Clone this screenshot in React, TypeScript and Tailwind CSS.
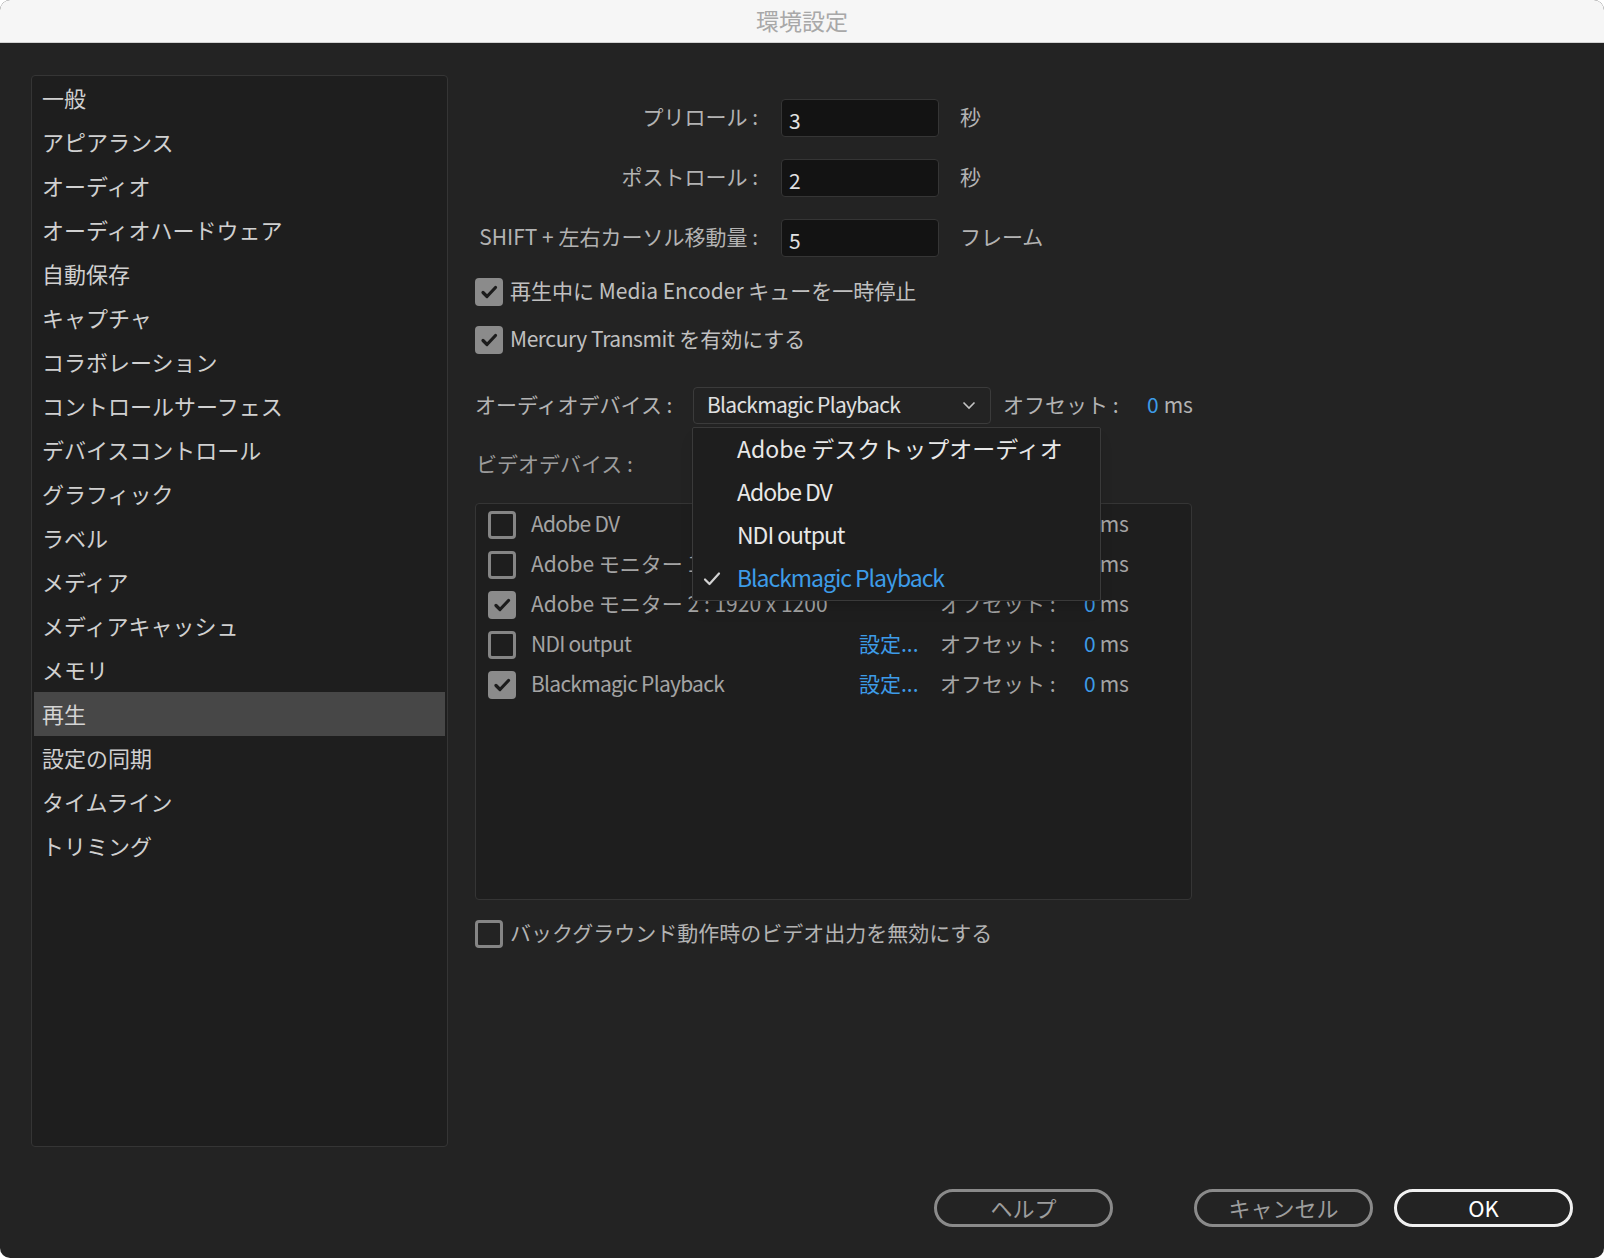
import React from 'react';

const SIDEBAR = [
  '一般',
  'アピアランス',
  'オーディオ',
  'オーディオハードウェア',
  '自動保存',
  'キャプチャ',
  'コラボレーション',
  'コントロールサーフェス',
  'デバイスコントロール',
  'グラフィック',
  'ラベル',
  'メディア',
  'メディアキャッシュ',
  'メモリ',
  '再生',
  '設定の同期',
  'タイムライン',
  'トリミング',
];

const DEVICES = [
  { name: 'Adobe DV', checked: false, settings: false, latin: true },
  { name: 'Adobe モニター 1 : 1920 x 1080', checked: false, settings: false, latin: false },
  { name: 'Adobe モニター 2 : 1920 x 1200', checked: true, settings: false, latin: false },
  { name: 'NDI output', checked: false, settings: true, latin: true },
  { name: 'Blackmagic Playback', checked: true, settings: true, latin: true },
];

const MENU = [
  { label: 'Adobe デスクトップオーディオ', latin: false },
  { label: 'Adobe DV', latin: true },
  { label: 'NDI output', latin: true },
  { label: 'Blackmagic Playback', latin: true },
];

const CheckBox = ({ checked }: { checked: boolean }) =>
  checked ? (
    <span className="w-[28px] h-[28px] shrink-0 rounded-[4px] bg-[#8b8b8b] flex items-center justify-center">
      <svg width="20" height="20" viewBox="0 0 20 20">
        <path d="M4 10.5l4 4L16.5 5.5" stroke="#1c1c1c" strokeWidth="3.2" fill="none" strokeLinecap="round" strokeLinejoin="round" />
      </svg>
    </span>
  ) : (
    <span className="w-[28px] h-[28px] shrink-0 rounded-[4px] border-[3px] border-[#858585]" />
  );

const NumRow = ({ label, value, unit }: { label: string; value: string; unit: string }) => (
  <div className="flex items-center h-[38px]">
    <span className="w-[283px] pb-[3px] text-right text-[21px] text-[#b3b3b3] whitespace-nowrap">{label}</span>
    <div className="ml-[23px] w-[158px] h-[38px] rounded-[4px] bg-[#131313] border border-[#353535] flex items-center pl-[7px] pt-[4px] text-[21px] text-[#e2e2e2]">
      {value}
    </div>
    <span className="ml-[21px] pb-[3px] text-[21px] text-[#b3b3b3]">{unit}</span>
  </div>
);

export default function App() {
  return (
    <div className="w-[1604px] h-[1258px] bg-white font-['Noto_Sans_CJK_JP',sans-serif] leading-none">
      <div className="w-full h-full rounded-[10px] overflow-hidden bg-[#232323] flex flex-col">
        {/* title bar */}
        <div className="h-[43px] shrink-0 bg-[#f6f6f6] border-b border-[#d2d2d2] flex items-center justify-center pb-[2px] text-[23px] text-[#a8a8a8]">
          環境設定
        </div>

        <div className="flex-1 flex flex-col px-[31px] pt-[32px] pb-[31px]">
          <div className="flex h-[1072px]">
            {/* sidebar */}
            <div className="w-[417px] h-full rounded-[4px] border border-[#353535] bg-[#1e1e1e] px-[2px]">
              {SIDEBAR.map((item) => (
                <div
                  key={item}
                  className={
                    item === '再生'
                      ? 'h-[44px] flex items-center pl-[8px] pb-[3px] text-[22px] text-[#d4d4d4] bg-[#474747]'
                      : 'h-[44px] flex items-center pl-[8px] pb-[3px] text-[22px] text-[#d0d0d0]'
                  }
                >
                  {item}
                </div>
              ))}
            </div>

            {/* main panel */}
            <div className="ml-[27px] flex flex-col pt-[24px]">
              <div className="flex flex-col gap-[22px]">
                <NumRow label="プリロール :" value="3" unit="秒" />
                <NumRow label="ポストロール :" value="2" unit="秒" />
                <NumRow label="SHIFT + 左右カーソル移動量 :" value="5" unit="フレーム" />
              </div>

              <div className="mt-[21px] flex flex-col gap-[20px]">
                <label className="flex items-center gap-[7px] text-[21px] text-[#c0c0c0]">
                  <CheckBox checked />
                  <span className="pb-[3px]">再生中に Media Encoder キューを一時停止</span>
                </label>
                <label className="flex items-center gap-[7px] text-[21px] text-[#c0c0c0]">
                  <CheckBox checked />
                  <span className="pb-[3px]">
                    <span className="tracking-[-0.02em]">Mercury Transmit</span> を有効にする
                  </span>
                </label>
              </div>

              {/* audio device */}
              <div className="mt-[33px] flex items-center h-[37px]">
                <span className="w-[218px] pb-[3px] text-[21px] text-[#b3b3b3]">オーディオデバイス :</span>
                <div className="relative">
                  <div className="w-[298px] h-[37px] rounded-[4px] border border-[#3b3b3b] bg-[#232323] flex items-center justify-between pl-[13px] pr-[14px] text-[21px] text-[#e0e0e0]">
                    <span className="pb-[2px] tracking-[-0.035em]">Blackmagic Playback</span>
                    <svg width="14" height="9" viewBox="0 0 14 9">
                      <path d="M1.5 1.5l5.5 5.5 5.5-5.5" stroke="#c4c4c4" strokeWidth="1.6" fill="none" />
                    </svg>
                  </div>
                  {/* open popup menu */}
                  <div className="absolute left-[-1px] top-[40px] z-10 w-[409px] rounded-[2px] border border-[#3a3a3a] bg-[#1e1e1e] shadow-lg">
                    {MENU.map((m) => (
                      <div key={m.label} className="relative h-[43px] flex items-center pl-[44px] pb-[3px]">
                        {m.label === 'Blackmagic Playback' && (
                          <svg className="absolute left-[10px] top-[14px]" width="18" height="16" viewBox="0 0 18 16">
                            <path d="M2 8.5l4.5 4.5L16 2.5" stroke="#d2d2d2" strokeWidth="2.2" fill="none" strokeLinecap="round" strokeLinejoin="round" />
                          </svg>
                        )}
                        <span
                          className={
                            (m.label === 'Blackmagic Playback' ? 'text-[23px] text-[#3d9ce8]' : 'text-[23px] text-[#e8e8e8]') +
                            (m.latin ? ' tracking-[-0.045em]' : '')
                          }
                        >
                          {m.label}
                        </span>
                      </div>
                    ))}
                  </div>
                </div>
                <span className="ml-[12px] w-[144px] pb-[3px] text-[21px] text-[#b3b3b3]">オフセット :</span>
                <span className="pb-[3px] text-[21px] text-[#3d9ce8]">0</span>
                <span className="ml-[5px] pb-[3px] text-[21px] text-[#b3b3b3]">ms</span>
              </div>

              {/* video devices */}
              <div className="mt-[26px] h-[30px] flex items-center pl-[1px] pb-[3px] text-[21px] text-[#9c9c9c]">ビデオデバイス :</div>

              <div className="mt-[23px] w-[717px] h-[397px] rounded-[4px] border border-[#353535] bg-[#1e1e1e] pt-[1px]">
                {DEVICES.map((d) => (
                  <div key={d.name} className="h-[40px] flex items-center pl-[12px] text-[21px] text-[#a4a4a4]">
                    <CheckBox checked={d.checked} />
                    <span className={'ml-[15px] w-[328px] pb-[3px] whitespace-nowrap' + (d.latin ? ' tracking-[-0.035em]' : '')}>
                      {d.name}
                    </span>
                    <span className="w-[81px] pb-[3px] text-[#3d9ce8]">{d.settings ? '設定...' : ''}</span>
                    <span className="w-[144px] pb-[3px]">オフセット :</span>
                    <span className="pb-[3px] text-[#3d9ce8]">0</span>
                    <span className="ml-[4px] pb-[3px]">ms</span>
                  </div>
                ))}
              </div>

              <label className="mt-[20px] flex items-center gap-[7px] text-[21px] text-[#b3b3b3]">
                <CheckBox checked={false} />
                <span className="pb-[3px]">バックグラウンド動作時のビデオ出力を無効にする</span>
              </label>
            </div>
          </div>

          {/* buttons */}
          <div className="mt-[42px] flex justify-end items-center">
            <button className="w-[179px] h-[38px] rounded-full border-[3px] border-[#8a8a8a] pb-[2px] text-[22px] text-[#9d9d9d]">ヘルプ</button>
            <button className="ml-[81px] w-[179px] h-[38px] rounded-full border-[3px] border-[#8a8a8a] pb-[2px] text-[22px] text-[#9d9d9d]">キャンセル</button>
            <button className="ml-[21px] w-[179px] h-[38px] rounded-full border-[3px] border-[#f0f0f0] pb-[2px] text-[22px] text-white">OK</button>
          </div>
        </div>
      </div>
    </div>
  );
}
